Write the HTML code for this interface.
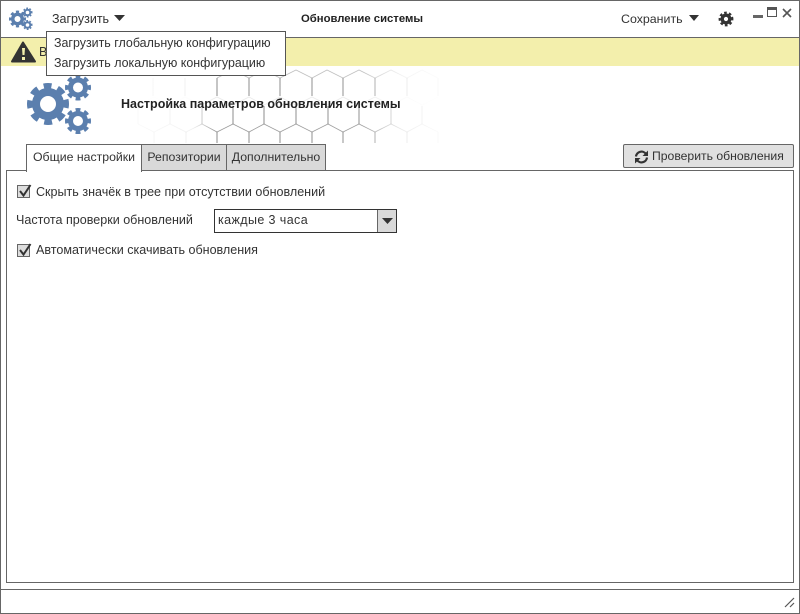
<!DOCTYPE html>
<html><head><meta charset="utf-8"><style>
html,body{margin:0;padding:0;background:#fff}
body{width:800px;height:614px;position:relative;overflow:hidden;font-family:"Liberation Sans","DejaVu Sans",sans-serif;font-size:12.5px;color:#333}
.a{position:absolute;box-sizing:border-box;white-space:nowrap}
.t{line-height:16px}
.tab{background:#d9d9d9;border:1px solid #666;height:27px;top:144px;line-height:24px;text-align:center;font-size:12.3px}
.chk{width:13px;height:13px;background:#ddd;border:1px solid #666}
svg{position:absolute;overflow:visible}
</style></head><body>
<svg style="left:0;top:0" width="800" height="614">
<defs><linearGradient id="h" gradientUnits="userSpaceOnUse" x1="135" y1="0" x2="452" y2="0">
<stop offset="0" stop-color="#aaa" stop-opacity=".08"/><stop offset=".18" stop-color="#999" stop-opacity=".2"/><stop offset=".25" stop-color="#555" stop-opacity=".85"/><stop offset=".72" stop-color="#555" stop-opacity=".8"/><stop offset=".85" stop-color="#999" stop-opacity=".25"/><stop offset="1" stop-color="#aaa" stop-opacity="0"/></linearGradient></defs>
<g fill="none" stroke="url(#h)" stroke-width=".8">
<path opacity=".45" d="M217 78L233 70L249 78L264 70L280 78L296 70L312 78L327 70L343 78L359 70L375 78L391 70L407 78L422 70L438 78"/>
<path d="M153 78V96M185 78V96M217 78V96M249 78V96M280 78V96M312 78V96M343 78V96M375 78V96M407 78V96M438 78V96"/>
<path opacity=".15" d="M138 105L154 97L170 105L185 97L201 105L217 97L233 105L249 97L264 105L280 97L296 105L312 97L328 105L343 97L359 105L375 97L391 105L407 97L422 105L438 97"/>
<path d="M138 106V124M170 106V124M202 106V124M233 106V124M264 106V124M296 106V124M328 106V124M359 106V124M391 106V124M422 106V124"/>
<path opacity=".7" d="M138 124L154 132L170 124L186 132L202 124L217 132L233 124L249 132L264 124L280 132L296 124L312 132L328 124L343 132L359 124L375 132L391 124L407 132L422 124L438 132"/>
<path d="M154 132V143M186 132V143M217 132V143M249 132V143M280 132V143M312 132V143M343 132V143M375 132V143M407 132V143M438 132V143"/>
</g>
<g fill="none" stroke="#5b7fae">
<circle cx="48" cy="104" r="12" stroke-width="8"/><circle cx="48" cy="104" r="18" stroke-width="6" pathLength="16" stroke-dasharray="1.1 .9" stroke-dashoffset=".55"/>
<circle cx="78" cy="87.500" r="7.500" stroke-width="5"/><circle cx="78" cy="87.500" r="11" stroke-width="4" pathLength="16" stroke-dasharray="1.1 .9" stroke-dashoffset=".55"/>
<circle cx="78" cy="121" r="7.500" stroke-width="5"/><circle cx="78" cy="121" r="11" stroke-width="4" pathLength="16" stroke-dasharray="1.1 .9" stroke-dashoffset=".55"/>
<circle cx="17.500" cy="19" r="4.750" stroke-width="3.500"/><circle cx="17.500" cy="19" r="7.250" stroke-width="2.500" pathLength="16" stroke-dasharray="1.100 .9" stroke-dashoffset=".55"/>
<circle cx="27.500" cy="12.500" r="2.800" stroke-width="2"/><circle cx="27.500" cy="12.500" r="4.250" stroke-width="1.500" pathLength="16" stroke-dasharray="1.100 .9" stroke-dashoffset=".55"/>
<circle cx="27.500" cy="25" r="2.800" stroke-width="2"/><circle cx="27.500" cy="25" r="4.250" stroke-width="1.500" pathLength="16" stroke-dasharray="1.100 .9" stroke-dashoffset=".55"/>
</g>
<g fill="none" stroke="#333">
<circle cx="726" cy="19" r="3.800" stroke-width="3.400"/><circle cx="726" cy="19" r="6.300" stroke-width="2.200" pathLength="16" stroke-dasharray="1.100 .9" stroke-dashoffset=".55"/>
</g>
</svg>
<div class="a" style="left:0;top:0;width:800px;height:614px;border:1px solid #666;pointer-events:none"></div>
<div class="a" style="left:1px;top:37px;width:798px;height:29px;background:#f3efac;border-top:1px solid #666"></div>
<svg style="left:11px;top:41px" width="25" height="22"><path d="M12 1.500L24 20.500H1Z" fill="#333" stroke="#333" stroke-width="2" stroke-linejoin="round"/><path d="M11 7h3l-.5 7h-2ZM11 16h3v3h-3Z" fill="#f3efac"/></svg>
<div class="a t" style="left:39px;top:44px">В</div>
<div class="a t" style="left:52px;top:11px">Загрузить</div>
<svg style="left:114px;top:15px" width="11" height="6"><path d="M0 0H11L5.500 6Z" fill="#333"/></svg>
<div class="a t" style="left:301px;top:11px;font-size:11.300px;font-weight:bold;color:#222">Обновление системы</div>
<div class="a t" style="left:621px;top:11px;font-size:12.400px">Сохранить</div>
<svg style="left:689px;top:15px" width="10" height="6"><path d="M0 0H10L5 6Z" fill="#333"/></svg>
<div class="a" style="left:753px;top:15px;width:10px;height:3px;background:#666"></div>
<div class="a" style="left:767px;top:7px;width:10px;height:10px;border:1px solid #555;border-top-width:3px"></div>
<svg style="left:782px;top:8px" width="10" height="10"><path d="M1 1L9 9M9 1L1 9" stroke="#555" stroke-width="1.600" fill="none"/></svg>
<div class="a" style="left:46px;top:31px;width:240px;height:45px;background:#fff;border:1px solid #555"></div>
<div class="a t" style="left:54px;top:35px;font-size:12.450px">Загрузить глобальную конфигурацию</div>
<div class="a t" style="left:54px;top:55px;font-size:12.450px">Загрузить локальную конфигурацию</div>
<div class="a t" style="left:121px;top:96px;font-weight:bold;font-size:12.500px;color:#222">Настройка параметров обновления системы</div>
<div class="a" style="left:6px;top:170px;width:788px;height:413px;border:1px solid #666;background:#fff"></div>
<div class="a tab" style="left:26px;width:116px;background:#fff;border-bottom:0;height:28px">Общие настройки</div>
<div class="a tab" style="left:141px;width:86px">Репозитории</div>
<div class="a tab" style="left:226px;width:100px">Дополнительно</div>
<div class="a" style="left:623px;top:144px;width:171px;height:24px;background:#e0e0e0;border:1px solid #666;border-radius:2px;line-height:22px;padding-left:28px;font-size:12.200px">Проверить обновления</div>
<svg style="left:634px;top:150px" width="15" height="14"><g fill="none" stroke="#333" stroke-width="2.200"><path d="M2 6.500A5.500 5.500 0 0 1 12 4"/><path d="M13 7.500A5.500 5.500 0 0 1 3 10"/></g><path d="M14 0.500V6H8.500ZM1 13.500V8H6.500Z" fill="#333"/></svg>
<div class="a chk" style="left:17px;top:185px"></div>
<svg style="left:17px;top:183px" width="16" height="16"><path d="M3 8L6.500 12.500L13.500 2" fill="none" stroke="#333" stroke-width="2"/></svg>
<div class="a t" style="left:36px;top:184px;font-size:12.550px">Скрыть значёк в трее при отсутствии обновлений</div>
<div class="a t" style="left:16px;top:212px;font-size:12.550px">Частота проверки обновлений</div>
<div class="a" style="left:214px;top:209px;width:183px;height:24px;border:1px solid #333;background:#fff"></div>
<div class="a" style="left:377px;top:210px;width:19px;height:22px;background:#d9d9d9;border-left:1px solid #666"></div>
<svg style="left:382px;top:218px" width="11" height="6"><path d="M0 0H11L5.500 6Z" fill="#333"/></svg>
<div class="a t" style="left:218px;top:212px;letter-spacing:.4px">каждые 3 часа</div>
<div class="a chk" style="left:17px;top:244px"></div>
<svg style="left:17px;top:242px" width="16" height="16"><path d="M3 8L6.500 12.500L13.500 2" fill="none" stroke="#333" stroke-width="2"/></svg>
<div class="a t" style="left:36px;top:242px;font-size:12.550px">Автоматически скачивать обновления</div>
<div class="a" style="left:1px;top:589px;width:798px;height:1px;background:#666"></div>
<svg style="left:784px;top:597px" width="12" height="12"><path d="M1 10L10 1M6 10L10 6" stroke="#555" stroke-width="1.200" fill="none"/></svg>
</body></html>
